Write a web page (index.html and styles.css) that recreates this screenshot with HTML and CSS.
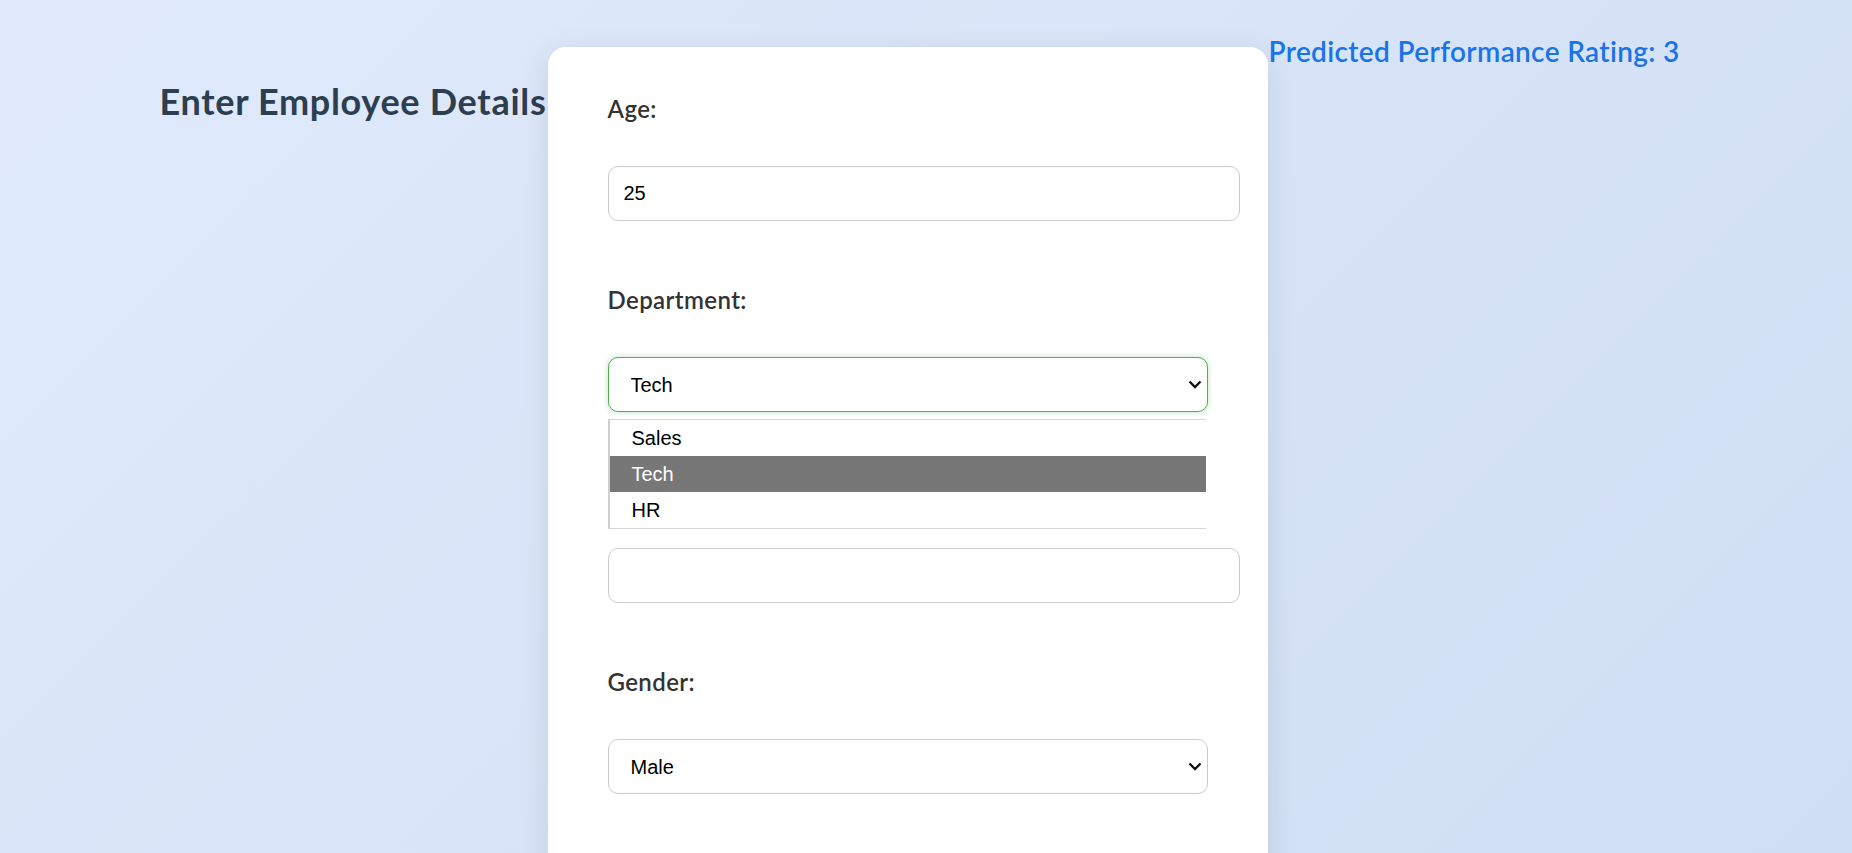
FILE: index.html
```html
<!DOCTYPE html>
<html lang="en">
<head>
<meta charset="utf-8">
<title>Employee Performance Predictor</title>
<link rel="stylesheet" href="styles.css">
</head>
<body>
  <div class="page">
    <h2 class="title">Enter Employee Details</h2>
    <form class="card">
      <label class="field-label" for="age">Age:</label>
      <input class="text-input" id="age" type="text" value="25">

      <label class="field-label" for="dept">Department:</label>
      <div class="select-wrap">
        <select class="select select-focus" id="dept">
          <option>Sales</option>
          <option selected>Tech</option>
          <option>HR</option>
        </select>
        <svg class="chevron" width="14" height="9" viewBox="0 0 14 9"><path d="M1.5 1.5 L7 7 L12.5 1.5" fill="none" stroke="#111" stroke-width="2.4"/></svg>
        <div class="dropdown">
          <div class="option">Sales</div>
          <div class="option active">Tech</div>
          <div class="option">HR</div>
        </div>
      </div>

      <label class="field-label covered" for="exp">Years of Experience:</label>
      <input class="text-input" id="exp" type="text" value="">

      <label class="field-label" for="gender">Gender:</label>
      <div class="select-wrap">
        <select class="select" id="gender">
          <option selected>Male</option>
          <option>Female</option>
        </select>
        <svg class="chevron" width="14" height="9" viewBox="0 0 14 9"><path d="M1.5 1.5 L7 7 L12.5 1.5" fill="none" stroke="#111" stroke-width="2.4"/></svg>
      </div>
    </form>
    <p class="result">Predicted Performance Rating: 3</p>
  </div>
</body>
</html>
```

FILE: styles.css
```css
html, body {
  margin: 0;
  padding: 0;
  overflow: hidden;
}

body {
  min-height: 100vh;
  background: linear-gradient(135deg, #e0eafc 0%, #cfdef3 100%);
  font-family: "Lato", "Segoe UI", sans-serif;
}

.page {
  display: flex;
  justify-content: center;
  align-items: flex-start;
}

.title {
  width: 388px;
  flex: none;
  margin: 79px 0 0 0;
  font-size: 36px;
  line-height: 44px;
  font-weight: 700;
  letter-spacing: 0.7px;
  color: #2c3e50;
  white-space: nowrap;
}

.card {
  width: 600px;
  flex: none;
  margin-top: 47px;
  padding: 46px 60px 45px 60px;
  background: #ffffff;
  border-radius: 18px;
  box-shadow: 0 6px 30px rgba(0, 0, 0, 0.1);
}

.result {
  width: 424px;
  flex: none;
  margin: 34px 0 0 1px;
  font-size: 28px;
  line-height: 34px;
  font-weight: 600;
  letter-spacing: 0.35px;
  color: #1a73e8;
  white-space: nowrap;
}

.field-label {
  display: block;
  margin-bottom: 41px;
  font-size: 24px;
  line-height: 32px;
  font-weight: 600;
  letter-spacing: 0.4px;
  color: #333333;
}

.field-label.covered {
  visibility: hidden;
}

.text-input {
  display: block;
  width: 100%;
  height: 23px;
  padding: 15px 15px 15px 15px;
  margin: 0 0 63px 0;
  border: 1px solid #cccccc;
  border-radius: 10px;
  font-family: "Liberation Sans", Arial, sans-serif;
  font-size: 20px;
  color: #000000;
  background: #ffffff;
  outline: none;
}

.select-wrap {
  position: relative;
  width: 100%;
  margin-bottom: 63px;
}

.select {
  display: block;
  width: 100%;
  height: 55px;
  box-sizing: border-box;
  padding: 0 40px 0 22px;
  border: 1px solid #cccccc;
  border-radius: 10px;
  font-family: "Liberation Sans", Arial, sans-serif;
  font-size: 20px;
  color: #000000;
  background: #ffffff;
  appearance: none;
  -webkit-appearance: none;
  outline: none;
}

.select-focus {
  border-color: #4caf50;
  box-shadow: 0 0 6px rgba(76, 175, 80, 0.35);
}

.chevron {
  position: absolute;
  right: 6px;
  top: 23px;
  pointer-events: none;
}

.dropdown {
  position: absolute;
  left: 0;
  top: 62px;
  width: 598px;
  box-sizing: border-box;
  background: #ffffff;
  border-top: 1px solid #d6d6d6;
  border-bottom: 1px solid #d6d6d6;
  border-left: 2px solid #cfcfcf;
  z-index: 5;
}

.option {
  height: 36px;
  padding-left: 22px;
  font-family: "Liberation Sans", Arial, sans-serif;
  font-size: 20px;
  line-height: 36px;
  color: #000000;
}

.option.active {
  background: #777777;
  color: #ffffff;
}
```
